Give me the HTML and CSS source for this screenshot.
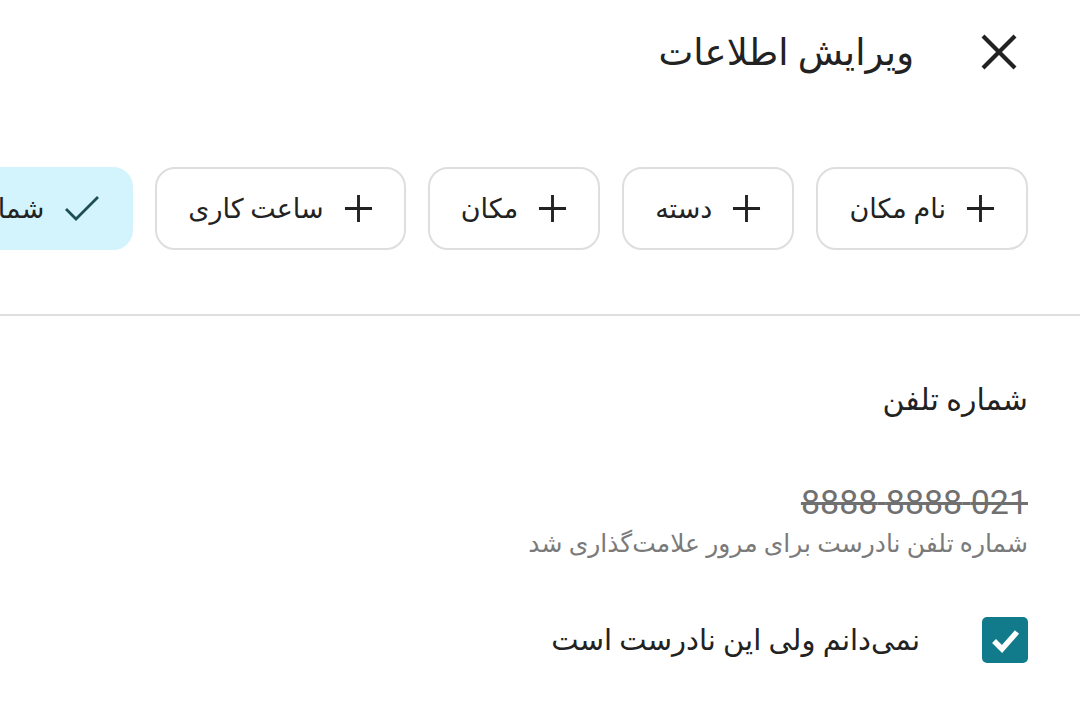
FILE: index.html
```html
<!DOCTYPE html>
<html lang="fa" dir="rtl">
<head>
  <meta charset="UTF-8">
  <meta name="viewport" content="width=device-width, initial-scale=1.0">
  <title>ویرایش اطلاعات</title>
  <link rel="stylesheet" href="styles.css">
</head>
<body>
  <div class="sheet">
    <header class="top-bar">
      <button class="close-btn" aria-label="بستن">
        <svg viewBox="0 0 36 36" width="36" height="36">
          <path d="M2 2 L34 34 M34 2 L2 34" stroke="#222" stroke-width="4.2" fill="none"/>
        </svg>
      </button>
      <h1 class="title">ویرایش اطلاعات</h1>
    </header>

    <div class="chips">
      <button class="chip">
        <svg class="plus" viewBox="0 0 30 30"><path d="M15 1 V29 M1 15 H29" stroke="#222" stroke-width="3" fill="none"/></svg>
        <span>نام مکان</span>
      </button>
      <button class="chip">
        <svg class="plus" viewBox="0 0 30 30"><path d="M15 1 V29 M1 15 H29" stroke="#222" stroke-width="3" fill="none"/></svg>
        <span>دسته</span>
      </button>
      <button class="chip">
        <svg class="plus" viewBox="0 0 30 30"><path d="M15 1 V29 M1 15 H29" stroke="#222" stroke-width="3" fill="none"/></svg>
        <span>مکان</span>
      </button>
      <button class="chip">
        <svg class="plus" viewBox="0 0 30 30"><path d="M15 1 V29 M1 15 H29" stroke="#222" stroke-width="3" fill="none"/></svg>
        <span>ساعت کاری</span>
      </button>
      <button class="chip selected">
        <svg class="check" viewBox="0 0 36 30"><path d="M2 15 L12 25 L34 3" stroke="#1d4f52" stroke-width="2.8" fill="none"/></svg>
        <span>شماره تلفن</span>
      </button>
    </div>

    <hr class="divider">

    <section class="field">
      <h2 class="field-title">شماره تلفن</h2>
      <div class="old-value">021 8888 8888</div>
      <p class="hint">شماره تلفن نادرست برای مرور علامت‌گذاری شد</p>

      <label class="confirm">
        <span class="box">
          <svg viewBox="0 0 46 46" width="46" height="46"><path d="M12 24 L20 32 L35 15" stroke="#fff" stroke-width="5.5" fill="none"/></svg>
        </span>
        <span class="confirm-text">نمی‌دانم ولی این نادرست است</span>
      </label>
    </section>
  </div>
</body>
</html>
```

FILE: styles.css
```css
body {
  margin: 0;
  background-color: #fff;
  color: #222;
  font-family: Roboto, "DejaVu Sans", sans-serif;
  overflow: hidden;
}

.sheet {
  width: 1080px;
  height: 720px;
  overflow: hidden;
}

.top-bar {
  display: flex;
  align-items: center;
  height: 104px;
  padding-right: 63px;
  gap: 67px;
}

.close-btn {
  background: none;
  border: none;
  padding: 0;
  width: 36px;
  height: 36px;
  cursor: pointer;
}

.close-btn svg {
  display: block;
}

.title {
  margin: 0;
  font-size: 37px;
  font-weight: 400;
  color: #222;
}

.chips {
  display: flex;
  gap: 22px;
  padding: 63px 52px 64px 0;
  overflow: hidden;
  white-space: nowrap;
}

.chip {
  flex-shrink: 0;
  display: flex;
  align-items: center;
  gap: 20px;
  height: 83px;
  padding: 0 31px;
  background-color: #fff;
  border: 2px solid #dedede;
  border-radius: 20px;
  font-family: inherit;
  font-size: 27px;
  color: #222;
  cursor: pointer;
}

.chip .plus {
  width: 29px;
  height: 29px;
}

.chip.selected {
  background-color: #d3f4fc;
  border-color: #d3f4fc;
}

.chip .check {
  width: 36px;
  height: 30px;
}

.divider {
  margin: 0;
  border: none;
  height: 2px;
  background-color: #dedede;
}

.field {
  padding: 0 52px;
}

.field-title {
  margin: 64px 0 0;
  font-size: 30px;
  font-weight: 400;
  line-height: 40px;
  color: #222;
}

.old-value {
  margin-top: 62px;
  font-size: 34px;
  line-height: 40px;
  color: #707070;
  text-decoration: line-through;
}

.hint {
  margin: 6px 0 0;
  font-size: 25px;
  line-height: 32px;
  color: #7a7a7a;
}

.confirm {
  display: flex;
  align-items: center;
  gap: 62px;
  margin-top: 56px;
  height: 48px;
}

.box {
  display: block;
  width: 46px;
  height: 46px;
  border-radius: 5px;
  background-color: #117b8b;
}

.box svg {
  display: block;
}

.confirm-text {
  font-size: 29px;
  color: #222;
}
```
